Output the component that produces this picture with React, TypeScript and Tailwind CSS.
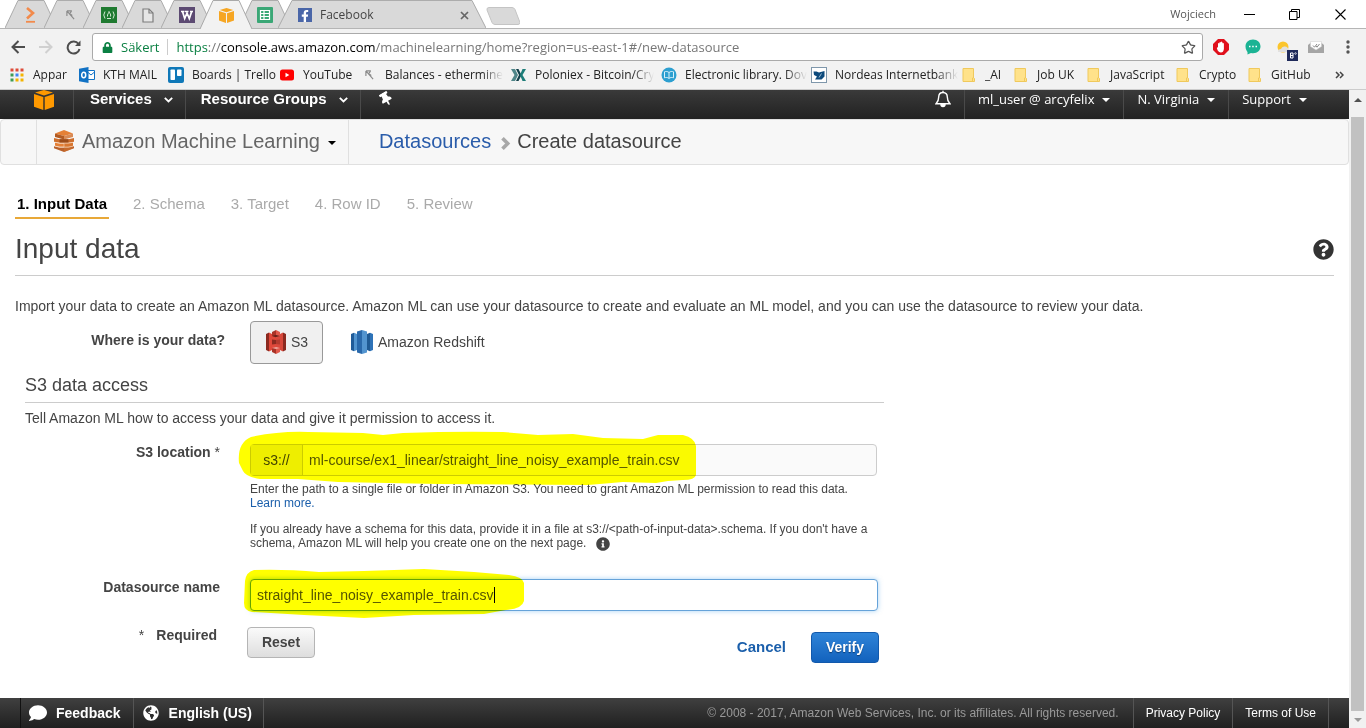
import React from "react";
import { FaQuestionCircle, FaInfoCircle, FaComment, FaGlobeAmericas, FaThumbtack, FaFacebookF, FaLock } from "react-icons/fa";
import { Star } from "lucide-react";

const ui = "font-['Open_Sans','Noto_Sans',sans-serif]";

/* ---------- drawings ---------- */

const SwordIcon = () => (
  <svg width="9" height="10" viewBox="0 0 10 11" fill="none" stroke="#8a8a8a" strokeWidth="1.300">
    <path d="M1 1h5.500M1 1v5.500M1.500 1.500l7.500 8.500M6 1.500L4 4l3 2" />
  </svg>
);

const CubeIcon = ({ size = 16, color = "#f6a623" }: { size?: number; color?: string }) => (
  <svg width={size} height={size} viewBox="0 0 20 20">
    <path d="M10 0l9 2.500-9 3-9-3z" fill={color} />
    <path d="M0 4l9.300 3v13L0 16.800z" fill={color} />
    <path d="M20 4l-9.300 3v13L20 16.800z" fill={color} />
  </svg>
);

const TabIcons: React.ReactNode[] = [
  <svg width="12" height="16" viewBox="0 0 12 16" fill="none" stroke="#f28a4b" strokeWidth="2.600">
    <path d="M2 1l6 5-6 5.500" /><path d="M1 14.800h9" strokeWidth="1.800" />
  </svg>,
  <SwordIcon />,
  <svg width="16" height="16" viewBox="0 0 16 16">
    <rect width="16" height="16" fill="#1f7a30" />
    <g fill="none" stroke="#d5ead5" strokeWidth="1"><path d="M4 4.500Q1.500 8 4 11.500M12 4.500q2.500 3.500 0 7" /><path d="M8 4.500c.5 2 2.300 2.500 1.500 5M8 4.500c0 2-2 2.500-1.500 5M6 11.500h4" /></g>
  </svg>,
  <svg width="12" height="15" viewBox="0 0 12 15" fill="#e6e6e6" stroke="#7d7d7d" strokeWidth="1.200">
    <path d="M1 1h6l4 4v9H1z" /><path d="M7 1v4h4" fill="none" />
  </svg>,
  <svg width="16" height="16" viewBox="0 0 16 16">
    <rect width="16" height="16" fill="#5c4a72" />
    <path d="M2 4.500h3.500M6 4.500h3.500M11 4.500h3M3.500 4.500l2.200 7L8 6l2.300 5.500L12.700 4.500" fill="none" stroke="#fff" strokeWidth="1.700" />
  </svg>,
  <CubeIcon size={15} />,
  <svg width="16" height="16" viewBox="0 0 16 16">
    <rect width="16" height="16" rx="1" fill="#3aa776" />
    <path d="M3.500 3.500h9v9h-9zM3.500 6.500h9M3.500 9.500h9M7 3.500v9" fill="none" stroke="#fff" strokeWidth="1.200" />
  </svg>,
];

const AppsIcon = () => {
  const colors = ["#dd4b39", "#dd4b39", "#dd4b39", "#3f9b55", "#4285f4", "#f4b400", "#3f9b55", "#f4b400", "#f4b400"];
  return (
    <svg width="14" height="14" viewBox="0 0 14 14">
      {colors.map((c, i) => <rect key={i} x={(i % 3) * 5 + 0.500} y={Math.floor(i / 3) * 5 + 0.500} width="3" height="3" fill={c} />)}
    </svg>
  );
};

const OutlookIcon = () => (
  <svg width="16" height="16" viewBox="0 0 16 16">
    <path d="M8 3.500h7.500v9H8" fill="#fff" stroke="#1272c4" />
    <path d="M8.500 5l3.500 3 3.500-3" fill="none" stroke="#1272c4" />
    <path d="M0 1.800L9.500 0v16L0 14.200z" fill="#1272c4" />
    <ellipse cx="4.700" cy="8" rx="2" ry="2.700" fill="none" stroke="#fff" strokeWidth="1.500" />
  </svg>
);

const TrelloIcon = () => (
  <svg width="16" height="16" viewBox="0 0 16 16">
    <rect width="16" height="16" rx="2" fill="#0f78b8" />
    <rect x="2.500" y="2.500" width="4.500" height="10.500" rx=".8" fill="#fff" />
    <rect x="9" y="2.500" width="4.500" height="6.500" rx=".8" fill="#fff" />
  </svg>
);

const YoutubeIcon = () => (
  <svg width="16" height="16" viewBox="0 0 16 16">
    <rect x="1" y="2.500" width="14" height="11" rx="2.500" fill="#f00" />
    <path d="M6.500 5.800v4.400L10.300 8z" fill="#fff" />
  </svg>
);

const PoloniexIcon = () => (
  <svg width="16" height="14" viewBox="0 0 16 14">
    <path d="M0 1h4l3 6-3 6H0l3.500-6z" fill="#4f8588" />
    <path d="M5 1h2.500l3 6-3 6H5l3-6z" fill="#12404a" />
    <path d="M11.500 1H15l-3.500 6L15 13h-3.500L9 7z" fill="#1d7d78" />
  </svg>
);

const LibraryIcon = () => (
  <svg width="16" height="16" viewBox="0 0 16 16">
    <circle cx="8" cy="8" r="7.500" fill="#2c9fd0" />
    <path d="M8 5.500C6.500 4.300 5 4.300 3.500 4.800v6c1.500-.5 3-.5 4.500.6 1.500-1.100 3-1.100 4.500-.6v-6C11 4.300 9.500 4.300 8 5.500v5.800" fill="none" stroke="#d8f1fb" />
  </svg>
);

const NordeaIcon = () => (
  <svg width="16" height="16" viewBox="0 0 16 16">
    <rect x=".5" y=".5" width="15" height="15" fill="#fff" stroke="#7f97ab" />
    <path d="M2.500 4.500h3L8 5.500l5.500-1.500v5.500l-3 3H4l2-3-3-1.500z" fill="#0c4a7c" />
    <path d="M8 10.500l2.500-4" stroke="#9dbdd6" />
  </svg>
);

const FolderIcon = () => (
  <svg width="16" height="16" viewBox="0 0 16 16">
    <path d="M2 1.500h10.500v9.500l1 .5v3H2z" fill="#ffe28a" stroke="#f0c95c" />
    <path d="M11.500 14v-3l1.500-1" fill="none" stroke="#f0c95c" />
  </svg>
);

const BellIcon = () => (
  <svg width="16" height="18" viewBox="0 0 16 18" fill="none" stroke="#fff" strokeWidth="1.400">
    <path d="M8 2.500c-3 0-4.300 2-4.300 4.500 0 4-1.200 5-2.700 6.800h14C13.500 12 12.300 11 12.300 7c0-2.500-1.300-4.500-4.300-4.500zM8 2.500V.8" />
    <path d="M6 14.500a2 2 0 004 0z" fill="#fff" />
  </svg>
);

const MlIcon = () => (
  <svg width="20" height="22" viewBox="0 0 20 22">
    <path d="M10 0L1 3.500 10 6l9-2.500z" fill="#e58036" />
    <path d="M1 3.500L10 6v3.500L1 7z" fill="#b35b22" /><path d="M19 3.500L10 6v3.500L19 7z" fill="#d98a55" />
    <path d="M0 8l5.500 1.200h9L20 8v3.800l-5.500 1h-9L0 11.800z" fill="#cf6f2d" />
    <path d="M5.500 9.200h9v3.600h-9z" fill="#9c4c1a" />
    <path d="M1 12.800l4.500.8h9l4.500-.8v3l-4.500 1h-9l-4.500-1z" fill="#e58036" />
    <path d="M0 16.300l5.500 1.200h9l5.500-1.200v2L10 22 0 18.300z" fill="#b9602a" />
    <path d="M10 13v9l9-3.500v-6z" fill="#cf6f2d" opacity=".6" />
    <path d="M1 12.300l5 .8h8l5-.8M1 16.200l5 1h8l5-1M10 13.200v3.800" fill="none" stroke="#f6d2b6" strokeWidth=".6" />
  </svg>
);

const S3Icon = () => (
  <svg width="20" height="24" viewBox="0 0 20 24">
    <path d="M0 4l3-1.500v19L0 20z" fill="#8c2a20" />
    <path d="M3 2.500L10 6v12l-7 3.500z" fill="#e0483a" />
    <path d="M20 4l-3-1.500v19l3-1.500z" fill="#8c2a20" />
    <path d="M17 2.500L10 6v12l7 3.500z" fill="#d8483b" />
    <path d="M6 2l4-2v7.500L6 6zM6 22l4 2v-7l-4 1.500z" fill="#a93226" />
    <path d="M14 2l-4-2v7.500L14 6zM14 22l-4 2v-7l4 1.500z" fill="#e0584a" />
    <path d="M6 9.500l4 .5v4l-4 .5z" fill="#8c2a20" /><path d="M14 9.500l-4 .5v4l4 .5z" fill="#b53a2e" />
    <path d="M6 6l4-1 4 1-4 1z" fill="#5e1f18" /><path d="M6 18l4-1 4 1-4 1z" fill="#f2a59c" />
  </svg>
);

const RedshiftIcon = () => (
  <svg width="22" height="24" viewBox="0 0 22 24">
    <path d="M0 4l3-1.300v18.600L0 20z" fill="#205b98" /><path d="M3 2.700L6 4v16l-3 1.300z" fill="#5294cf" />
    <path d="M22 4l-3-1.300v18.600l3-1.300z" fill="#2e73b8" /><path d="M19 2.700L16 4v16l3 1.300z" fill="#1f5a94" />
    <path d="M6 1.500L11 0v24l-5-1.500z" fill="#2a69ab" /><path d="M16 1.500L11 0v24l5-1.500z" fill="#5294cf" />
  </svg>
);

const Caret = () => (
  <svg width="8" height="4" viewBox="0 0 8 4"><path d="M0 0h8L4 4z" fill="currentColor" /></svg>
);

const Chevron = () => (
  <svg width="9" height="6" viewBox="0 0 9 6" fill="none" stroke="#fff" strokeWidth="1.800"><path d="M.8.800l3.700 3.700L8.200.8" /></svg>
);

/* ---------- browser chrome ---------- */

function TabShape({ active, wide }: { active?: boolean; wide?: boolean }) {
  const fill = active ? "#f2f2f2" : "#d9d9d9";
  return wide ? (
    <svg className="absolute inset-0 h-full w-full" viewBox="0 0 208 29" preserveAspectRatio="none">
      <path d="M0 29L14 .5h180L208 29" fill={fill} stroke="#a9a9a9" />
    </svg>
  ) : (
    <svg className="absolute inset-0 h-full w-full" viewBox="0 0 52 29" preserveAspectRatio="none">
      <path d="M0 29L13 .5h26L52 29" fill={fill} stroke="#a9a9a9" />
    </svg>
  );
}

function TabStrip() {
  return (
    <div className="flex h-[29px] items-stretch border-b border-[#b5b5b5] bg-white pl-[18px]">
      {TabIcons.map((icon, i) => (
        <button key={i} aria-label={`Tab ${i + 1}`} className={i === 5 ? "relative z-10 -mb-px -ml-[13px] flex w-[52px] items-center justify-center pt-0.5" : "relative -ml-[13px] flex w-[52px] items-center justify-center pt-0.5"}>
          <TabShape active={i === 5} />
          <span className="relative">{icon}</span>
        </button>
      ))}
      <div className="relative -ml-[13px] flex w-[208px] items-center pl-5 pr-[17px] pt-0.5">
        <TabShape wide />
        <span className="relative flex h-[14px] w-[14px] items-end justify-center bg-[#4a66a8] text-white"><FaFacebookF size={12} /></span>
        <button className="relative ml-2 flex-1 text-left text-xs text-[#444]">Facebook</button>
        <button aria-label="Close tab" className="relative">
          <svg width="9" height="9" viewBox="0 0 9 9" stroke="#666" strokeWidth="1.700"><path d="M1 1l7 7M8 1L1 8" /></svg>
        </button>
      </div>
      <button aria-label="New tab" className="flex items-center pt-1">
        <svg width="34" height="18" viewBox="0 0 34 18"><path d="M3 .5h23q2 0 3 2l5 13q0 2-2 2H9q-2 0-3-2L1 3Q.5.5 3 .5z" fill="#d9d9d9" stroke="#c4c4c4" /></svg>
      </button>
      <div className="ml-auto flex items-center pr-5">
        <span className="mr-7 text-[11px] text-[#555]">Wojciech</span>
        <button aria-label="Minimize" className="mr-[34px]"><svg width="11" height="11" viewBox="0 0 11 11" stroke="#000"><path d="M0 5.500h11" /></svg></button>
        <button aria-label="Restore" className="mr-[35px]">
          <svg width="11" height="11" viewBox="0 0 11 11" fill="none" stroke="#000"><path d="M.5 2.500h7.500v8H.5zM2.500 2.500v-2h8v8H8" /></svg>
        </button>
        <button aria-label="Close"><svg width="11" height="11" viewBox="0 0 11 11" stroke="#000" strokeWidth="1.100"><path d="M.5.5l10 10M10.500.5l-10 10" /></svg></button>
      </div>
    </div>
  );
}

function Toolbar() {
  return (
    <div className="flex h-8 items-center pl-[11px] pr-4 pt-1">
      <button aria-label="Back" className="mr-[14px]"><svg width="14" height="14" viewBox="0 0 14 14" fill="none" stroke="#4d4d4d" strokeWidth="2"><path d="M14 7H1.500M7.500 1l-6 6 6 6" /></svg></button>
      <button aria-label="Forward" className="mr-[13px]"><svg width="14" height="14" viewBox="0 0 14 14" fill="none" stroke="#d0d0d0" strokeWidth="2"><path d="M0 7h12.500M6.500 1l6 6-6 6" /></svg></button>
      <button aria-label="Reload" className="mr-[11px]"><svg width="15" height="15" viewBox="0 0 15 15" fill="none" stroke="#4d4d4d" strokeWidth="2"><path d="M12.500 4A6 6 0 1013.500 9" /><path d="M14.500.5V6H9z" fill="#4d4d4d" stroke="none" /></svg></button>
      <div className="flex h-7 flex-1 items-center rounded-[3px] border border-[#aaa] bg-white pl-[9px] pr-1.5">
        <FaLock size={11} color="#0b8043" />
        <span className="ml-2 text-[13px] text-[#0b8043]">Säkert</span>
        <span className="mx-2 h-4 w-px bg-[#ccc]" />
        <div className="flex-1 whitespace-nowrap text-[13px] text-[#777]"><span className="text-[#0b8043]">https</span>://<span className="text-black">console.aws.amazon.com</span>/machinelearning/home?region=us-east-1#/new-datasource</div>
        <button aria-label="Bookmark this page"><Star size={15} strokeWidth={2} color="#555" /></button>
      </div>
      <div className="flex items-center pl-[10px]">
        <svg width="16" height="16" viewBox="0 0 16 16"><path d="M5 0h6l5 5v6l-5 5H5l-5-5V5z" fill="#e0101c" /><path d="M5 8V4.500q.7-1 1.400 0V3.500q.8-1 1.500 0V3q.8-1 1.500.3v1q.8-.8 1.500.2V10q-.5 3.500-3 3.500-2 0-3.200-2L3.800 9z" fill="#fff" /></svg>
        <svg className="ml-4" width="16" height="16" viewBox="0 0 16 16"><path d="M8 .5C3.500.5.5 3.500.5 7.500c0 3 1.500 4.500 2 5.500v2.500L6 14c6 1 9.500-2.500 9.500-6.500S12.500.5 8 .5z" fill="#1bb394" /><path d="M4 7.500h1.500M7.200 7.500h1.500M10.500 7.500H12" stroke="#fff" strokeWidth="1.500" /></svg>
        <svg className="ml-4 mt-2" width="22" height="21" viewBox="0 0 22 21"><circle cx="6" cy="6" r="5.500" fill="#fbc52c" /><path d="M1 11q0-3 3-3 1-3 4-2.500Q11 6 11 8q2 0 2 3z" fill="#e0e0e0" /><rect x="10" y="9" width="11" height="11" fill="#1f2a5a" /><path d="M13.500 12h2.500v5h-2.500zM13.500 14.500H16" fill="none" stroke="#fff" /><circle cx="18.500" cy="12.500" r=".8" fill="none" stroke="#fff" strokeWidth=".7" /></svg>
        <svg className="ml-[9px]" width="16" height="14" viewBox="0 0 16 14"><path d="M0 5l3-2.500h10L16 5v8H0z" fill="#a5a5a5" /><path d="M2.500 1.500h11v5L8 10 2.500 6.500z" fill="#fff" stroke="#ccc" strokeWidth=".5" /><path d="M5 5.500l1.500 1.700L9 4M8 6l1 1.200L11.500 4" fill="none" stroke="#888" /></svg>
        <button aria-label="Menu" className="ml-[22px]"><svg width="4" height="14" viewBox="0 0 4 14" fill="#555"><circle cx="2" cy="2" r="1.700" /><circle cx="2" cy="7" r="1.700" /><circle cx="2" cy="12" r="1.700" /></svg></button>
      </div>
    </div>
  );
}

const bookmarks: { label: string; width: string; icon: React.ReactNode; fade?: boolean }[] = [
  { label: "Appar", width: "w-[70px]", icon: <AppsIcon /> },
  { label: "KTH MAIL", width: "w-[89px]", icon: <OutlookIcon /> },
  { label: "Boards | Trello", width: "w-[111px]", icon: <TrelloIcon /> },
  { label: "YouTube", width: "w-[82px]", icon: <YoutubeIcon /> },
  { label: "Balances - ethermine", width: "w-[150px]", icon: <SwordIcon />, fade: true },
  { label: "Poloniex - Bitcoin/Cry", width: "w-[150px]", icon: <PoloniexIcon />, fade: true },
  { label: "Electronic library. Dov", width: "w-[150px]", icon: <LibraryIcon />, fade: true },
  { label: "Nordeas Internetbank", width: "w-[150px]", icon: <NordeaIcon />, fade: true },
  { label: "_AI", width: "w-[52px]", icon: <FolderIcon /> },
  { label: "Job UK", width: "w-[73px]", icon: <FolderIcon /> },
  { label: "JavaScript", width: "w-[89px]", icon: <FolderIcon /> },
  { label: "Crypto", width: "w-[72px]", icon: <FolderIcon /> },
  { label: "GitHub", width: "w-[72px]", icon: <FolderIcon /> },
];

function Bookmarks() {
  return (
    <nav aria-label="Bookmarks" className="flex h-[29px] items-center border-b border-[#ccc] pb-px pl-[9px] text-xs text-[#222]">
      {bookmarks.map((b) => (
        <a key={b.label} href="#" className={`flex shrink-0 items-center gap-2 ${b.width}`}>
          <span className="flex w-4 shrink-0 justify-center">{b.icon}</span>
          <span className={b.fade ? "whitespace-nowrap [mask-image:linear-gradient(to_right,black_82%,transparent)]" : "whitespace-nowrap"}>{b.label}</span>
        </a>
      ))}
      <button aria-label="More bookmarks" className="ml-auto mr-[22px]">
        <svg width="9" height="8" viewBox="0 0 9 8" fill="none" stroke="#444" strokeWidth="1.500"><path d="M1 1l3 3-3 3M5 1l3 3-3 3" /></svg>
      </button>
    </nav>
  );
}

/* ---------- console ---------- */

function AwsNav() {
  return (
    <header className="flex h-[29px] items-stretch overflow-hidden bg-linear-to-b from-[#3a3a3a] to-[#222] text-white">
      <a href="#" aria-label="Console home" className="flex w-[73px] items-start pl-[34px]"><CubeIcon size={20} color="#ff9900" /></a>
      <button className="flex items-start border-l border-[#4a4a4a] pl-4 pr-3 text-[15px] font-bold leading-[18px]">Services<span className="ml-3 flex h-5 items-center"><Chevron /></span></button>
      <button className="flex items-start border-l border-[#4a4a4a] pl-[15px] pr-3 text-[15px] font-bold leading-[18px]">Resource Groups<span className="ml-3 flex h-5 items-center"><Chevron /></span></button>
      <button aria-label="Pin" className="flex items-start border-l border-[#4a4a4a] pl-[18px] pt-0.5"><FaThumbtack size={14} className="-rotate-30" /></button>
      <div className={`ml-auto flex items-stretch text-[13px] leading-[18px] ${ui}`}>
        <button aria-label="Notifications" className="flex items-start pr-[13px]"><BellIcon /></button>
        <button className="flex items-start border-l border-[#4a4a4a] px-[13px]">ml_user @ arcyfelix<span className="ml-2 flex h-5 items-center"><Caret /></span></button>
        <button className="flex items-start border-l border-[#4a4a4a] px-[13px]">N. Virginia<span className="ml-2 flex h-5 items-center"><Caret /></span></button>
        <button className="flex items-start border-l border-[#4a4a4a] pl-[13px] pr-[42px]">Support<span className="ml-2 flex h-5 items-center"><Caret /></span></button>
      </div>
    </header>
  );
}

function ServiceBar() {
  return (
    <div className="flex h-[46px] items-stretch rounded border border-[#e0e0e0] bg-[#f7f7f7] pb-0.5 pl-[35px] text-xl">
      <button className="-mb-0.5 flex items-center border-x border-[#e0e0e0] pb-0.5 pl-[17px] pr-3 text-[#666]">
        <MlIcon /><span className="ml-2">Amazon Machine Learning</span><span className="ml-2 mt-1 text-black"><Caret /></span>
      </button>
      <div className="flex items-center pl-[30px] text-[#444]">
        <a href="#" className="text-[#2a5caa]">Datasources</a>
        <svg className="ml-[9px] mr-1.5 mt-1" width="11" height="13" viewBox="0 0 11 13" fill="none" stroke="#a8a8a8" strokeWidth="3.600"><path d="M2.500 1.300L7.700 6.500 2.500 11.700" /></svg>
        <span>Create datasource</span>
      </div>
    </div>
  );
}

function InputDataForm() {
  return (
    <form onSubmit={(e) => e.preventDefault()}>
      <div className="mt-[5px] flex">
        <span className="mt-[9px] w-[210px] text-right font-bold">Where is your data?</span>
        <button type="button" className="ml-[25px] flex h-[43px] w-[73px] items-center gap-[5px] rounded border border-[#999] bg-[#f0f0f0] pb-0.5 pl-[15px]"><S3Icon />S3</button>
        <button type="button" className="ml-7 flex items-center gap-[5px] pb-0.5"><RedshiftIcon />Amazon Redshift</button>
      </div>

      <div className="ml-[10px] max-w-[859px]">
        <h2 className="mt-[9px] border-b border-[#ccc] pb-[5px] text-lg leading-6">S3 data access</h2>
        <p className="mt-[5px]">Tell Amazon ML how to access your data and give it permission to access it.</p>

        <div className="mt-[14px] flex">
          <label htmlFor="s3" className="mr-[30px] w-[195px] shrink-0 text-right font-bold">S3 location <span className="font-normal">*</span></label>
          <div className="flex-1 pr-[7px] pt-0.5">
            <div className="relative flex h-8 rounded border border-[#ccc] bg-[#fafafa]">
              <span className="flex w-[52px] items-center justify-center border-r border-[#ccc] bg-[#eee]">s3://</span>
              <input id="s3" defaultValue="ml-course/ex1_linear/straight_line_noisy_example_train.csv" className="min-w-0 flex-1 bg-transparent px-1.5 text-[#555] outline-none" />
              <svg className="pointer-events-none absolute -left-[13px] -top-[14px] mix-blend-multiply" width="460" height="56" viewBox="0 0 460 56">
                <path d="M13 6Q40 0 70 1L125 2 145 4 165 2Q220 0 265 1L300 4 335 3 365 7 405 8 420 4 445 4Q457 7 458 15V44Q457 49 445 49L430 50 418 52 385 51 350 54 200 53 100 51 60 48 22 48Q8 46 5 40L1 32Q-1 12 13 6z" fill="#ffff00" />
              </svg>
            </div>
            <div className="mt-1.5 text-xs leading-[14px]">
              <p>Enter the path to a single file or folder in Amazon S3. You need to grant Amazon ML permission to read this data.</p>
              <p><a href="#" className="text-[#1b5fab]">Learn more.</a></p>
              <p className="mt-3">If you already have a schema for this data, provide it in a file at s3://&lt;path-of-input-data&gt;.schema. If you don't have a schema, Amazon ML will help you create one on the next page. <FaInfoCircle size={14} className="ml-1.5 inline-block" /></p>
            </div>
          </div>
        </div>

        <div className="mt-[26px] flex">
          <label htmlFor="name" className="mr-[30px] w-[195px] shrink-0 text-right font-bold">Datasource name</label>
          <div className="mr-1.5 flex-1 pt-0.5">
            <div className="relative">
              <input id="name" defaultValue="straight_line_noisy_example_train.csv" className="block h-8 w-full rounded border border-[#66a3d9] bg-white px-1.5 text-[#555] shadow-[0_0_5px_rgba(82,168,236,0.5)] outline-none" />
              <span className="absolute left-[244px] top-2 h-4 w-px bg-black" />
              <svg className="pointer-events-none absolute -left-1.5 -top-[10px] mix-blend-multiply" width="281" height="50" viewBox="0 0 281 50">
                <path d="M10 1Q40 0 75 3L120 2 180 0 230 3 265 6Q279 8 280 14V32Q278 40 262 41L240 45 170 46 120 49 60 46 8 43Q0 42 0 34L1 12Q2 3 10 1z" fill="#ffff00" />
              </svg>
            </div>
          </div>
        </div>

        <div className="mt-[14px] flex items-start">
          <span className="w-[192px] text-right font-bold"><span className="mr-3 font-normal">*</span>Required</span>
          <button type="reset" className="ml-[30px] mt-0.5 h-[31px] w-[68px] rounded border border-[#b5b5b5] bg-linear-to-b from-[#fafafa] to-[#dedede] font-bold">Reset</button>
          <div className="ml-auto mr-[5px] mt-[7px] flex items-center gap-[25px]">
            <button type="button" className="text-[15px] font-bold text-[#1b5fab]">Cancel</button>
            <button type="submit" className="h-[31px] w-[68px] rounded border border-[#1259ac] bg-linear-to-b from-[#2f84d8] to-[#1262bd] font-bold text-white [text-shadow:0_1px_1px_#0a3d77]">Verify</button>
          </div>
        </div>
      </div>
    </form>
  );
}

function Footer() {
  return (
    <footer className="flex h-[30px] items-stretch bg-linear-to-b from-[#404040] to-[#202020] pl-5 text-xs text-white">
      <button className="flex items-center border-l border-[#111] pl-2 pr-3 text-sm font-bold"><FaComment size={18} className="mr-[9px]" />Feedback</button>
      <button className="flex items-center border-x border-[#555] pl-[9px] pr-[11px] text-sm font-bold"><FaGlobeAmericas size={16} className="mr-[10px]" />English (US)</button>
      <span className="ml-auto flex items-center pr-[14px] text-[#999]">© 2008 - 2017, Amazon Web Services, Inc. or its affiliates. All rights reserved.</span>
      <a href="#" className="flex items-center border-l border-[#555] px-3">Privacy Policy</a>
      <a href="#" className="mr-5 flex items-center border-x border-[#555] px-3">Terms of Use</a>
    </footer>
  );
}

const steps = ["1. Input Data", "2. Schema", "3. Target", "4. Row ID", "5. Review"];

export default function App() {
  return (
    <div className="flex min-h-screen flex-col bg-white font-['Liberation_Sans',Arial,sans-serif] text-sm leading-5 text-[#444]">
      <div className={`bg-[#f2f2f2] ${ui}`}>
        <TabStrip />
        <Toolbar />
        <Bookmarks />
      </div>
      <div className="flex flex-1 items-stretch">
        <div className="flex min-w-0 flex-1 flex-col">
          <AwsNav />
          <ServiceBar />
          <main className="flex-1 px-[15px] pt-[29px]">
            <ol className="flex gap-[22px] text-[15px] leading-5">
              {steps.map((s, i) => (
                <li key={s} className={i === 0 ? "border-b-2 border-[#e8a838] px-0.5 pb-[3px] font-bold text-black" : "px-0.5 text-[#aaa]"}>{s}</li>
              ))}
            </ol>
            <div className="mt-3 flex items-center justify-between border-b border-[#ccc] pb-2">
              <h1 className="text-[28px] leading-9">Input data</h1>
              <button aria-label="Help"><FaQuestionCircle size={21} color="#333" /></button>
            </div>
            <p className="mt-5">Import your data to create an Amazon ML datasource. Amazon ML can use your datasource to create and evaluate an ML model, and you can use the datasource to review your data.</p>
            <InputDataForm />
          </main>
          <Footer />
        </div>
        <div aria-hidden="true" className="flex w-[17px] flex-col items-center bg-[#f1f1f1]">
          <div className="flex h-[27px] items-center pb-2 text-[#505050]"><svg width="8" height="4" viewBox="0 0 8 4"><path d="M0 4h8L4 0z" fill="currentColor" /></svg></div>
          <div className="w-[13px] flex-1 bg-[#c1c1c1]" />
          <div className="flex h-[17px] items-center text-[#999]"><svg width="8" height="4" viewBox="0 0 8 4"><path d="M0 0h8L4 4z" fill="currentColor" /></svg></div>
        </div>
      </div>
    </div>
  );
}
